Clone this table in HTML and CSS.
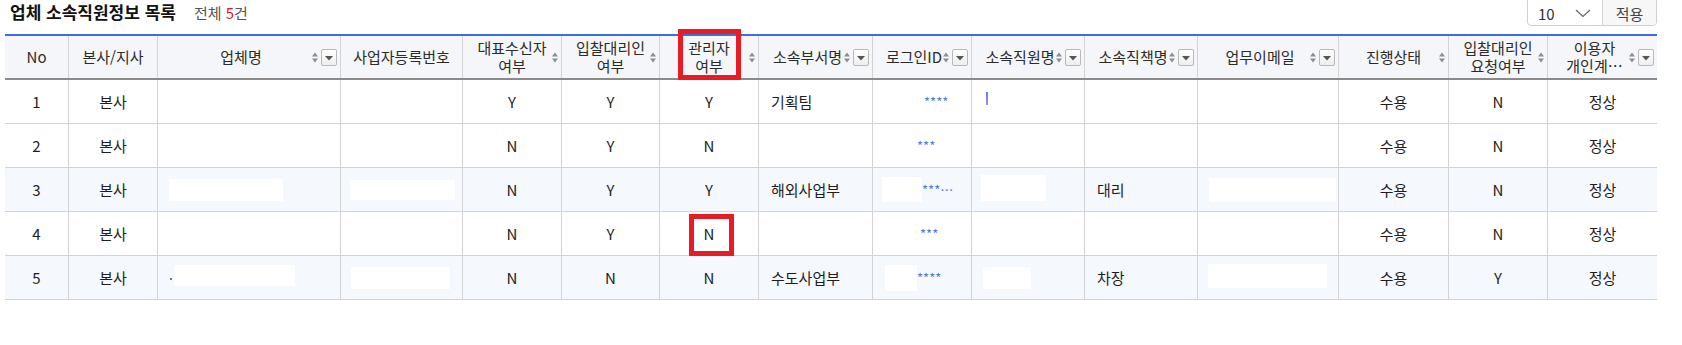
FILE: index.html
```html
<!DOCTYPE html>
<html lang="ko">
<head>
<meta charset="utf-8">
<title>업체 소속직원정보 목록</title>
<link rel="stylesheet" href="styles.css">
</head>
<body>
<div class="page">
  <div class="topbar">
    <div class="title-group">
      <h2 class="title">업체 소속직원정보 목록</h2>
      <span class="count">전체 <em>5</em>건</span>
    </div>
    <div class="pager-select">
      <div class="sel">
        <span>10</span>
        <svg class="chev" width="16" height="9" viewBox="0 0 16 9"><path d="M1 1 L8 7.5 L15 1" fill="none" stroke="#666" stroke-width="1.2"/></svg>
      </div>
      <div class="apply">적용</div>
    </div>
  </div>

  <div class="grid-wrap">
    <div class="row head">
      <div class="hc plain"><span class="lbl">No</span></div>
      <div class="hc plain"><span class="lbl">본사/지사</span></div>
      <div class="hc filt"><span class="lbl">업체명</span><svg class="sort" width="6" height="11" viewBox="0 0 6 11"><path d="M0 4.5 L3 0.5 L6 4.5Z M0 6.5 L3 10.5 L6 6.5Z" fill="#8e8e8e"/></svg><span class="fbtn"><svg width="8" height="5" viewBox="0 0 8 5"><path d="M0 0 L8 0 L4 4.5Z" fill="#555"/></svg></span></div>
      <div class="hc plain"><span class="lbl">사업자등록번호</span></div>
      <div class="hc srt"><span class="lbl">대표수신자<br>여부</span><svg class="sort" width="6" height="11" viewBox="0 0 6 11"><path d="M0 4.5 L3 0.5 L6 4.5Z M0 6.5 L3 10.5 L6 6.5Z" fill="#8e8e8e"/></svg></div>
      <div class="hc srt"><span class="lbl">입찰대리인<br>여부</span><svg class="sort" width="6" height="11" viewBox="0 0 6 11"><path d="M0 4.5 L3 0.5 L6 4.5Z M0 6.5 L3 10.5 L6 6.5Z" fill="#8e8e8e"/></svg></div>
      <div class="hc srt"><span class="lbl">관리자<br>여부</span><svg class="sort" width="6" height="11" viewBox="0 0 6 11"><path d="M0 4.5 L3 0.5 L6 4.5Z M0 6.5 L3 10.5 L6 6.5Z" fill="#8e8e8e"/></svg></div>
      <div class="hc filt"><span class="lbl">소속부서명</span><svg class="sort" width="6" height="11" viewBox="0 0 6 11"><path d="M0 4.5 L3 0.5 L6 4.5Z M0 6.5 L3 10.5 L6 6.5Z" fill="#8e8e8e"/></svg><span class="fbtn"><svg width="8" height="5" viewBox="0 0 8 5"><path d="M0 0 L8 0 L4 4.5Z" fill="#555"/></svg></span></div>
      <div class="hc filt"><span class="lbl">로그인ID</span><svg class="sort" width="6" height="11" viewBox="0 0 6 11"><path d="M0 4.5 L3 0.5 L6 4.5Z M0 6.5 L3 10.5 L6 6.5Z" fill="#8e8e8e"/></svg><span class="fbtn"><svg width="8" height="5" viewBox="0 0 8 5"><path d="M0 0 L8 0 L4 4.5Z" fill="#555"/></svg></span></div>
      <div class="hc filt"><span class="lbl">소속직원명</span><svg class="sort" width="6" height="11" viewBox="0 0 6 11"><path d="M0 4.5 L3 0.5 L6 4.5Z M0 6.5 L3 10.5 L6 6.5Z" fill="#8e8e8e"/></svg><span class="fbtn"><svg width="8" height="5" viewBox="0 0 8 5"><path d="M0 0 L8 0 L4 4.5Z" fill="#555"/></svg></span></div>
      <div class="hc filt"><span class="lbl">소속직책명</span><svg class="sort" width="6" height="11" viewBox="0 0 6 11"><path d="M0 4.5 L3 0.5 L6 4.5Z M0 6.5 L3 10.5 L6 6.5Z" fill="#8e8e8e"/></svg><span class="fbtn"><svg width="8" height="5" viewBox="0 0 8 5"><path d="M0 0 L8 0 L4 4.5Z" fill="#555"/></svg></span></div>
      <div class="hc filt"><span class="lbl">업무이메일</span><svg class="sort" width="6" height="11" viewBox="0 0 6 11"><path d="M0 4.5 L3 0.5 L6 4.5Z M0 6.5 L3 10.5 L6 6.5Z" fill="#8e8e8e"/></svg><span class="fbtn"><svg width="8" height="5" viewBox="0 0 8 5"><path d="M0 0 L8 0 L4 4.5Z" fill="#555"/></svg></span></div>
      <div class="hc srt"><span class="lbl">진행상태</span><svg class="sort" width="6" height="11" viewBox="0 0 6 11"><path d="M0 4.5 L3 0.5 L6 4.5Z M0 6.5 L3 10.5 L6 6.5Z" fill="#8e8e8e"/></svg></div>
      <div class="hc srt"><span class="lbl">입찰대리인<br>요청여부</span><svg class="sort" width="6" height="11" viewBox="0 0 6 11"><path d="M0 4.5 L3 0.5 L6 4.5Z M0 6.5 L3 10.5 L6 6.5Z" fill="#8e8e8e"/></svg></div>
      <div class="hc filt"><span class="lbl">이용자<br>개인계…</span><svg class="sort" width="6" height="11" viewBox="0 0 6 11"><path d="M0 4.5 L3 0.5 L6 4.5Z M0 6.5 L3 10.5 L6 6.5Z" fill="#8e8e8e"/></svg><span class="fbtn"><svg width="8" height="5" viewBox="0 0 8 5"><path d="M0 0 L8 0 L4 4.5Z" fill="#555"/></svg></span></div>
    </div>

    <div class="row">
      <div class="c">1</div>
      <div class="c">본사</div>
      <div class="c left"></div>
      <div class="c left"></div>
      <div class="c">Y</div>
      <div class="c">Y</div>
      <div class="c">Y</div>
      <div class="c left txt">기획팀</div>
      <div class="c left"><span class="mask" style="width:42px;height:22px"></span><span class="stars">****</span></div>
      <div class="c left"><span class="tick"></span></div>
      <div class="c left"></div>
      <div class="c left"></div>
      <div class="c">수용</div>
      <div class="c">N</div>
      <div class="c">정상</div>
    </div>

    <div class="row">
      <div class="c">2</div>
      <div class="c">본사</div>
      <div class="c left"></div>
      <div class="c left"></div>
      <div class="c">N</div>
      <div class="c">Y</div>
      <div class="c">N</div>
      <div class="c left txt"></div>
      <div class="c left"><span class="mask" style="width:35px;height:22px"></span><span class="stars">***</span></div>
      <div class="c left"></div>
      <div class="c left"></div>
      <div class="c left"></div>
      <div class="c">수용</div>
      <div class="c">N</div>
      <div class="c">정상</div>
    </div>

    <div class="row alt">
      <div class="c">3</div>
      <div class="c">본사</div>
      <div class="c left"><span class="mask" style="width:114px;height:22px;margin-left:2px"></span></div>
      <div class="c left"><span class="mask" style="width:105px;height:20px"></span></div>
      <div class="c">N</div>
      <div class="c">Y</div>
      <div class="c">Y</div>
      <div class="c left txt">해외사업부</div>
      <div class="c left"><span class="mask" style="width:40px;height:25px"></span><span class="stars">***…</span></div>
      <div class="c left"><span class="mask up" style="width:65px;height:26px"></span></div>
      <div class="c left txt">대리</div>
      <div class="c left"><span class="mask" style="width:127px;height:24px;margin-left:2px"></span></div>
      <div class="c">수용</div>
      <div class="c">N</div>
      <div class="c">정상</div>
    </div>

    <div class="row">
      <div class="c">4</div>
      <div class="c">본사</div>
      <div class="c left"></div>
      <div class="c left"></div>
      <div class="c">N</div>
      <div class="c">Y</div>
      <div class="c">N</div>
      <div class="c left txt"></div>
      <div class="c left"><span class="mask" style="width:38px;height:22px"></span><span class="stars">***</span></div>
      <div class="c left"></div>
      <div class="c left"></div>
      <div class="c left"></div>
      <div class="c">수용</div>
      <div class="c">N</div>
      <div class="c">정상</div>
    </div>

    <div class="row alt">
      <div class="c">5</div>
      <div class="c">본사</div>
      <div class="c left"><span class="dot"></span><span class="mask up" style="width:121px;height:21px"></span></div>
      <div class="c left"><span class="mask" style="width:99px;height:22px;margin-left:1px"></span></div>
      <div class="c">N</div>
      <div class="c">N</div>
      <div class="c">N</div>
      <div class="c left txt">수도사업부</div>
      <div class="c left"><span class="mask" style="width:32px;height:26px;margin-left:3px"></span><span class="stars">****</span></div>
      <div class="c left"><span class="mask" style="width:48px;height:22px;margin-left:2px"></span></div>
      <div class="c left txt">차장</div>
      <div class="c left"><span class="mask up" style="width:119px;height:24px;margin-left:1px"></span></div>
      <div class="c">수용</div>
      <div class="c">Y</div>
      <div class="c">정상</div>
    </div>

    <div class="mark mark-head"></div>
    <div class="mark mark-row"></div>
  </div>
</div>
</body>
</html>
```

FILE: styles.css
```css
html, body {
  margin: 0;
  padding: 0;
  background: #ffffff;
}

body {
  font-family: "Noto Sans CJK KR", "Noto Sans", sans-serif;
  color: #222222;
  font-size: 15px;
}

.page {
  padding: 0 25px 0 5px;
}

/* ---------- top bar ---------- */
.topbar {
  display: flex;
  justify-content: space-between;
  align-items: flex-start;
  height: 34px;
}

.title-group {
  display: flex;
  align-items: baseline;
  padding-left: 5px;
}

.title {
  margin: 0;
  font-size: 17px;
  font-weight: 700;
  line-height: 24px;
  color: #111111;
}

.count {
  margin-left: 18px;
  font-size: 15px;
  color: #555555;
}

.count em {
  font-style: normal;
  color: #e8141c;
}

.pager-select {
  display: flex;
  width: 130px;
  height: 29px;
  margin-top: -3px;
  box-sizing: border-box;
  border: 1px solid #cfcfcf;
  border-radius: 4px;
  overflow: hidden;
}

.sel {
  width: 74px;
  box-sizing: border-box;
  display: flex;
  align-items: center;
  justify-content: space-between;
  padding: 3px 11px 0 10px;
  font-size: 15px;
  color: #333333;
}

.chev {
  display: block;
}

.apply {
  flex: 1;
  display: flex;
  align-items: center;
  justify-content: center;
  padding-top: 3px;
  border-left: 1px solid #d6d6d6;
  background: #f7f7f7;
  font-size: 15px;
  color: #444444;
}

/* ---------- grid ---------- */
.grid-wrap {
  position: relative;
  border-top: 2px solid #3b6fdc;
}

.row {
  display: grid;
  grid-template-columns: 63px 89px 183px 122px 99px 98px 99px 114px 99px 113px 113px 141px 110px 99px 110px;
  height: 44px;
  box-sizing: border-box;
  border-bottom: 1px solid #d3d3d3;
  background: #ffffff;
}

.row.alt {
  background: #f5f8fd;
}

.row.head {
  height: 44px;
  background: #f4f6f9;
  border-bottom: 2px solid #8a8a8a;
}

.hc,
.c {
  display: flex;
  align-items: center;
  min-width: 0;
  box-sizing: border-box;
  border-left: 1px solid #d3d3d3;
}

.hc:first-child,
.c:first-child {
  border-left: none;
}

/* header cells */
.hc {
  font-size: 15px;
  line-height: 18px;
  color: #2b2b2b;
}

.hc .lbl {
  flex: 1;
  text-align: center;
  white-space: nowrap;
}

.hc.srt {
  padding: 0 3px 0 9px;
}

.hc.filt {
  padding: 0 3px 0 12px;
}

.sort {
  display: block;
  flex: none;
}

.fbtn {
  flex: none;
  width: 16px;
  height: 17px;
  margin-left: 3px;
  box-sizing: border-box;
  border: 1px solid #b9b9b9;
  border-radius: 2px;
  background: linear-gradient(#ffffff, #eeeeee);
  display: flex;
  align-items: center;
  justify-content: center;
  padding-top: 2px;
}

.fbtn svg {
  display: block;
}

/* body cells */
.c {
  justify-content: center;
  font-size: 15px;
  color: #1e1e1e;
}

.c.left {
  justify-content: flex-start;
  padding-left: 9px;
}

.c.txt {
  padding-left: 12px;
}

.mask {
  display: inline-block;
  flex: none;
  background: #ffffff;
}

.mask.up {
  margin-top: -4px;
}

.stars {
  font-size: 13px;
  color: #4f78ea;
  white-space: nowrap;
  margin-top: -1px;
}

.tick {
  display: inline-block;
  width: 2px;
  height: 13px;
  margin-left: 5px;
  margin-top: -6px;
  background: linear-gradient(#5b7cf0, #b28ae0);
}

.dot {
  display: inline-block;
  width: 2px;
  height: 2px;
  margin-left: 3px;
  margin-right: 2px;
  margin-top: 2px;
  background: #777777;
  flex: none;
}

/* red annotation boxes (overlay) */
.mark {
  position: absolute;
  box-sizing: border-box;
  border: 5px solid #e81c24;
  pointer-events: none;
}

.mark-head {
  left: 673px;
  top: -7px;
  width: 63px;
  height: 51px;
}

.mark-row {
  left: 684px;
  top: 178px;
  width: 45px;
  height: 42px;
}
```
